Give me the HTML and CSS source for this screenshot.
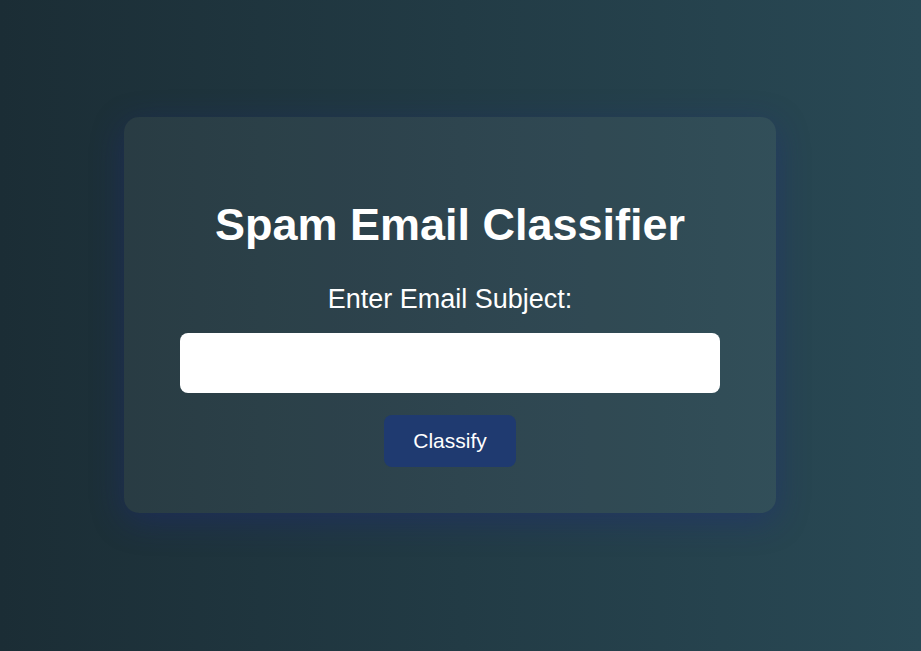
FILE: index.html
```html
<!DOCTYPE html>
<html lang="en">
<head>
<meta charset="utf-8">
<title>Spam Email Classifier</title>
<link rel="stylesheet" href="styles.css">
</head>
<body>
<main class="page">
  <form class="card">
    <h1 class="title">Spam Email Classifier</h1>
    <label class="label" for="subject">Enter Email Subject:</label>
    <input class="field" id="subject" type="text">
    <button class="btn" type="button">Classify</button>
  </form>
</main>
</body>
</html>
```

FILE: styles.css
```css
html, body {
  margin: 0;
  padding: 0;
  height: 100%;
}
body {
  background: linear-gradient(to right, #1b2d35 0%, #223b45 50%, #294955 100%);
  font-family: "Liberation Sans", Arial, sans-serif;
  color: #ffffff;
}
.page {
  box-sizing: border-box;
  height: 100vh;
  padding: 0 21px 21px 0;
  display: flex;
  align-items: center;
  justify-content: center;
}
.card {
  box-sizing: border-box;
  width: 652px;
  padding: 82px 56px 46px;
  border-radius: 15px;
  background: rgba(255, 255, 255, 0.055);
  box-shadow: 0 8px 32px rgba(31, 38, 135, 0.37);
  display: flex;
  flex-direction: column;
  align-items: center;
}
.title {
  margin: 0;
  font-size: 45px;
  line-height: 52px;
  font-weight: bold;
}
.label {
  margin-top: 33px;
  font-size: 27px;
  line-height: 31px;
}
.field {
  box-sizing: border-box;
  margin-top: 18px;
  width: 540px;
  height: 60px;
  border: none;
  border-radius: 8px;
  background: #ffffff;
  padding: 0 16px;
  font-size: 20px;
  font-family: inherit;
}
.btn {
  margin-top: 22px;
  width: 132px;
  height: 52px;
  border: none;
  border-radius: 8px;
  background: #1f3a70;
  color: #ffffff;
  font-family: inherit;
  font-size: 21px;
  cursor: pointer;
}
```
